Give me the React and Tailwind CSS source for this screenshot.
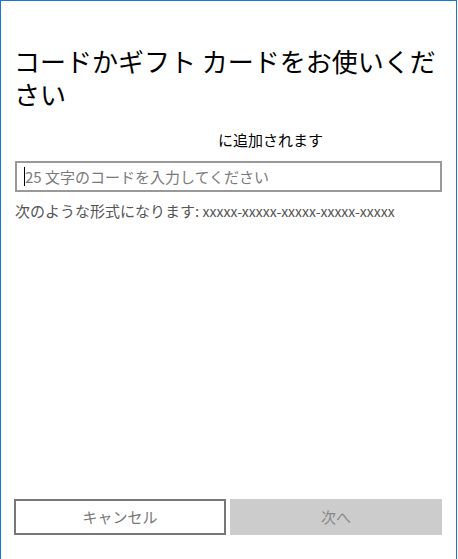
export default function App() {
  const font = { fontFamily: '"Noto Sans CJK JP", "Noto Sans", sans-serif' };

  return (
    <div
      className="w-[458px] h-[559px] bg-white flex"
      style={font}
    >
      <div className="w-[457px] h-[559px] border-l border-t border-r border-[#1a78c8] flex flex-col px-[14px] pt-[43px] pb-[24px]">
        {/* Title */}
        <h1 className="text-[26px] leading-[33px] font-normal text-black -ml-px">
          コードかギフト カードをお使いくださ​い
        </h1>

        <p className="mt-[20px] pl-[203px] text-[15px] leading-[20px] text-black">
          に追加されます
        </p>

        {/* Code input */}
        <div className="mt-[11px] h-[31px] border-2 border-[#999999] flex items-center pl-[7px]">
          <span className="w-px h-[19px] bg-black" />
          <span className="text-[15px] text-[#7a7a7a] leading-[20px]">
            25 文字のコードを入力してください
          </span>
        </div>

        <p className="mt-[9px] text-[15px] leading-[20px] text-[#555555]">
          次のような形式になります:{' '}
          <span className="text-[14px]">xxxxx-xxxxx-xxxxx-xxxxx-xxxxx</span>
        </p>

        {/* Buttons */}
        <div className="mt-auto flex gap-[4px] -ml-px">
          <button className="w-[212px] h-[36px] border-2 border-[#777777] bg-white text-[15px] text-[#777777]">
            キャンセル
          </button>
          <button className="flex-1 h-[36px] bg-[#cccccc] text-[15px] text-[#888888]">
            次へ
          </button>
        </div>
      </div>
    </div>
  );
}
